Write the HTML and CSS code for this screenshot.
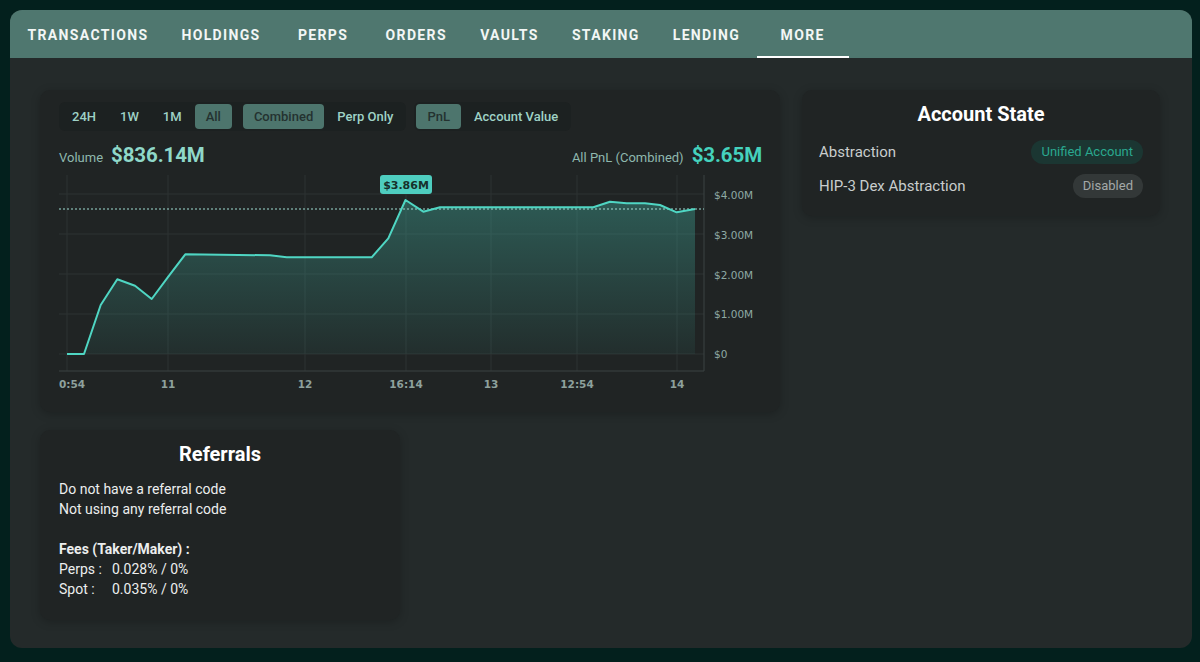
FILE: index.html
```html
<!DOCTYPE html>
<html lang="en">
<head>
  <meta charset="UTF-8">
  <meta name="viewport" content="width=device-width, initial-scale=1.0">
  <title>Account</title>
  <link rel="stylesheet" href="styles.css">
</head>
<body>
  <div class="panel">
    <nav class="tabs">
      <a class="tab" href="#">Transactions</a>
      <a class="tab" href="#">Holdings</a>
      <a class="tab" href="#">Perps</a>
      <a class="tab" href="#">Orders</a>
      <a class="tab" href="#">Vaults</a>
      <a class="tab" href="#">Staking</a>
      <a class="tab" href="#">Lending</a>
      <a class="tab active" href="#">More</a>
    </nav>

    <main class="content">
      <!-- PnL chart -->
      <section class="card chart-card">
        <div class="toolbar">
          <div class="seg-group">
            <span class="seg">24H</span>
            <span class="seg">1W</span>
            <span class="seg">1M</span>
            <span class="seg selected">All</span>
            <span class="seg selected split">Combined</span>
            <span class="seg">Perp Only</span>
          </div>
          <div class="seg-group">
            <span class="seg selected">PnL</span>
            <span class="seg">Account Value</span>
          </div>
        </div>

        <div class="stats">
          <div class="stat">
            <span class="stat-label">Volume</span>
            <span class="stat-value light">$836.14M</span>
          </div>
          <div class="stat">
            <span class="stat-label">All PnL (Combined)</span>
            <span class="stat-value">$3.65M</span>
          </div>
        </div>

        <svg class="chart" width="702" height="225" viewBox="0 0 702 225">
          <defs>
            <linearGradient id="area" x1="0" y1="0" x2="0" y2="1">
              <stop offset="0" stop-color="#3fa597" stop-opacity="0.42"/>
              <stop offset="1" stop-color="#3fa597" stop-opacity="0.08"/>
            </linearGradient>
          </defs>
          <g class="grid">
            <line x1="0" y1="24" x2="645" y2="24"/>
            <line x1="0" y1="64" x2="645" y2="64"/>
            <line x1="0" y1="104" x2="645" y2="104"/>
            <line x1="0" y1="144" x2="645" y2="144"/>
            <line x1="0" y1="184" x2="645" y2="184"/>
            <line x1="8" y1="5" x2="8" y2="201"/>
            <line x1="109" y1="5" x2="109" y2="201"/>
            <line x1="246" y1="5" x2="246" y2="201"/>
            <line x1="347" y1="5" x2="347" y2="201"/>
            <line x1="432" y1="5" x2="432" y2="201"/>
            <line x1="518" y1="5" x2="518" y2="201"/>
            <line x1="618" y1="5" x2="618" y2="201"/>
          </g>
          <line class="axis" x1="645" y1="5" x2="645" y2="201"/>
          <line class="axis" x1="0" y1="201" x2="645" y2="201"/>

          <path class="area" d="M8,184 L25,184 L41.7,135 L58.3,109.3 L76,115.7 L92.7,129 L109.3,106.7 L126.3,84.3 L211,85.3 L227.7,87.3 L312.7,87.3 L329.3,68.3 L346.5,30 L364.3,41.7 L381,37.3 L534.3,37.3 L551,31.7 L567.7,33.3 L586,33.3 L601,35 L617.7,42.3 L636,39 L636,184 Z"/>
          <line class="ref" x1="0" y1="39" x2="645" y2="39"/>
          <path class="line" d="M8,184 L25,184 L41.7,135 L58.3,109.3 L76,115.7 L92.7,129 L109.3,106.7 L126.3,84.3 L211,85.3 L227.7,87.3 L312.7,87.3 L329.3,68.3 L346.5,30 L364.3,41.7 L381,37.3 L534.3,37.3 L551,31.7 L567.7,33.3 L586,33.3 L601,35 L617.7,42.3 L636,39"/>

          <rect class="tip" x="321" y="5" width="52" height="19" rx="3"/>
          <text class="tip-text" x="347" y="18.5" text-anchor="middle">$3.86M</text>

          <g class="y-labels">
            <text x="655" y="29">$4.00M</text>
            <text x="655" y="69">$3.00M</text>
            <text x="655" y="109">$2.00M</text>
            <text x="655" y="148">$1.00M</text>
            <text x="655" y="188">$0</text>
          </g>
          <g class="x-labels" text-anchor="middle">
            <text x="0" y="218" text-anchor="start">0:54</text>
            <text x="109" y="218">11</text>
            <text x="246" y="218">12</text>
            <text x="347" y="218">16:14</text>
            <text x="432" y="218">13</text>
            <text x="518" y="218">12:54</text>
            <text x="618" y="218">14</text>
          </g>
        </svg>
      </section>

      <!-- Account state -->
      <section class="card account-card">
        <h2 class="card-title">Account State</h2>
        <div class="state-row">
          <span>Abstraction</span>
          <span class="pill pill-on">Unified Account</span>
        </div>
        <div class="state-row">
          <span>HIP-3 Dex Abstraction</span>
          <span class="pill pill-off">Disabled</span>
        </div>
      </section>

      <!-- Referrals -->
      <section class="card referrals-card">
        <h2 class="card-title">Referrals</h2>
        <p class="ref-line">Do not have a referral code</p>
        <p class="ref-line">Not using any referral code</p>
        <p class="ref-line fees-head">Fees (Taker/Maker) :</p>
        <p class="ref-line"><span class="fee-label">Perps :</span>0.028% / 0%</p>
        <p class="ref-line"><span class="fee-label">Spot :</span>0.035% / 0%</p>
      </section>
    </main>
  </div>
</body>
</html>
```

FILE: styles.css
```css
* {
  box-sizing: border-box;
}

body {
  margin: 0;
  padding: 10px 8px 14px 10px;
  background-color: #03201d;
  font-family: Roboto, "Liberation Sans", sans-serif;
  color: #e6e8e8;
}

.panel {
  height: 638px;
  border-radius: 12px;
  background-color: #242a2a;
  overflow: hidden;
}

/* top tabs */
.tabs {
  display: flex;
  height: 48px;
  padding-left: 1px;
  background-color: #4f776f;
}

.tab {
  display: flex;
  align-items: center;
  justify-content: center;
  min-width: 92px;
  padding: 1px 16.5px 0;
  color: #f2f6f5;
  text-decoration: none;
  text-transform: uppercase;
  font-size: 14px;
  font-weight: 700;
  letter-spacing: 1.35px;
  border-bottom: 2px solid transparent;
  border-top: 2px solid transparent;
}

.tab.active {
  border-bottom-color: #ffffff;
}

.content {
  display: grid;
  grid-template-columns: 740px 358px;
  column-gap: 22px;
  row-gap: 18px;
  align-items: start;
  padding: 32px 32px 0 30px;
}

.card {
  background-color: #202424;
  border-radius: 10px;
  box-shadow: 0 2px 10px rgba(0, 0, 0, 0.22);
}

.card-title {
  margin: 0;
  font-size: 20px;
  line-height: 24px;
  font-weight: 700;
  text-align: center;
  color: #ffffff;
}

/* chart card */
.chart-card {
  height: 322px;
  padding: 12px 18px 0 19px;
}

.toolbar {
  display: flex;
  gap: 8px;
}

.seg-group {
  display: flex;
  gap: 2px;
  padding: 2px;
  border-radius: 6px;
  background-color: #1c2121;
}

.seg {
  height: 25px;
  line-height: 25px;
  padding: 0 11px;
  border-radius: 4px;
  font-size: 13px;
  font-weight: 500;
  color: #9fd2c6;
}

.seg.selected {
  background-color: #4d756d;
  color: #243230;
}

.seg.split {
  margin-left: 9px;
}

.stats {
  display: flex;
  justify-content: space-between;
  align-items: center;
  height: 26px;
  margin-top: 11px;
}

.stat {
  display: flex;
  align-items: baseline;
  gap: 8px;
}

.stat-label {
  font-size: 13px;
  color: #8fb8ae;
}

.stat-value {
  font-size: 20.5px;
  font-weight: 700;
  letter-spacing: -0.1px;
  color: #45d2bd;
}

.stat-value.light {
  color: #8fd8c9;
}

.chart {
  display: block;
  margin-top: 2px;
}

.grid line {
  stroke: #2c3333;
  stroke-width: 1;
}

.axis {
  stroke: #3a4242;
  stroke-width: 1;
}

.area {
  fill: url(#area);
}

.line {
  fill: none;
  stroke: #4fd6c3;
  stroke-width: 2;
  stroke-linejoin: round;
}

.ref {
  stroke: #9fded3;
  stroke-width: 1;
  stroke-dasharray: 2 2;
}

.tip {
  fill: #4ecdbf;
}

.tip-text {
  font-family: "DejaVu Sans", sans-serif;
  font-size: 11px;
  font-weight: 700;
  fill: #17302c;
}

.y-labels text {
  font-family: "DejaVu Sans", sans-serif;
  font-size: 10.5px;
  fill: #8eaaa4;
}

.x-labels text {
  font-family: "DejaVu Sans", sans-serif;
  font-size: 10.5px;
  font-weight: 700;
  fill: #8ea19d;
}

/* account state */
.account-card {
  height: 126px;
  padding: 12px 17px 0 17px;
}

.account-card .card-title {
  margin-bottom: 14px;
}

.state-row {
  display: flex;
  justify-content: space-between;
  align-items: center;
  height: 24px;
  margin-bottom: 10px;
  font-size: 15px;
  color: #c9cdcd;
}

.pill {
  height: 24px;
  line-height: 24px;
  padding: 0 10px;
  border-radius: 12px;
  font-size: 13px;
}

.pill-on {
  background-color: #1b3632;
  color: #2aa88f;
}

.pill-off {
  background-color: #333838;
  color: #a3a8a8;
}

/* referrals */
.referrals-card {
  width: 360px;
  height: 190px;
  padding: 12px 19px 0 19px;
}

.referrals-card .card-title {
  margin-bottom: 13px;
}

.ref-line {
  margin: 0;
  font-size: 14px;
  line-height: 20px;
  color: #eceeee;
}

.fees-head {
  margin-top: 20px;
  font-weight: 700;
}

.fee-label {
  display: inline-block;
  width: 53px;
}
```
